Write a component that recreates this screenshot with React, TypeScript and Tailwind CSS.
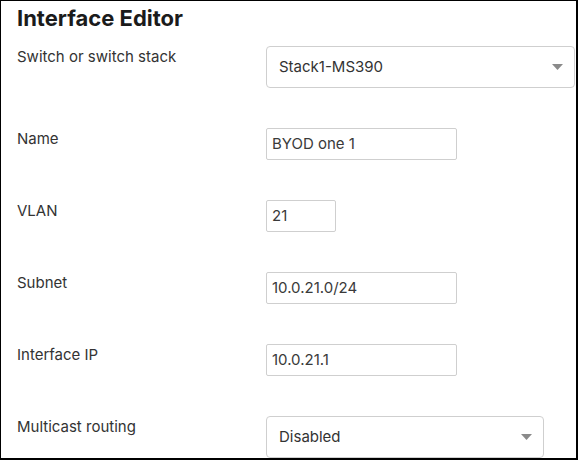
const font = { fontFamily: 'Inter, "Noto Sans", sans-serif' };

function Caret() {
  return (
    <svg width="11" height="6" viewBox="0 0 11 6" className="shrink-0">
      <path d="M0 0 L11 0 L5.5 6 Z" fill="#8a8a8a" />
    </svg>
  );
}

function SelectBox({ value, width }: { value: string; width: string }) {
  return (
    <div
      className={`${width} h-[42px] flex items-center justify-between pl-[12px] pr-[11px] border border-[#cfcfcf] rounded-[4px] bg-white text-[15px] text-[#333]`}
    >
      <span>{value}</span>
      <Caret />
    </div>
  );
}

function TextBox({ value, width }: { value: string; width: string }) {
  return (
    <div
      className={`${width} h-[32px] flex items-center pl-[5px] border border-[#cfcfcf] rounded-[2px] bg-white text-[15px] text-[#3a3a3a]`}
    >
      {value}
    </div>
  );
}

function Row({ label, children }: { label: string; children: React.ReactNode }) {
  return (
    <div className="flex items-start">
      <div className="w-[249px] shrink-0 text-[15px] leading-[22px] text-[#333]">{label}</div>
      {children}
    </div>
  );
}

export default function App() {
  return (
    <div
      style={font}
      className="w-[578px] h-[460px] overflow-hidden bg-white border-t border-l border-r-2 border-b-2 border-black pl-[16px] pt-[3px]"
    >
      <h1 className="text-[22px] leading-[28px] font-bold text-[#1b1b1b]">Interface Editor</h1>
      <div className="mt-[14px] flex flex-col gap-10">
        <Row label="Switch or switch stack">
          <SelectBox value="Stack1-MS390" width="w-[309px]" />
        </Row>
        <Row label="Name">
          <TextBox value="BYOD one 1" width="w-[191px]" />
        </Row>
        <Row label="VLAN">
          <TextBox value="21" width="w-[70px]" />
        </Row>
        <Row label="Subnet">
          <TextBox value="10.0.21.0/24" width="w-[191px]" />
        </Row>
        <Row label="Interface IP">
          <TextBox value="10.0.21.1" width="w-[191px]" />
        </Row>
        <Row label="Multicast routing">
          <SelectBox value="Disabled" width="w-[278px]" />
        </Row>
      </div>
    </div>
  );
}
